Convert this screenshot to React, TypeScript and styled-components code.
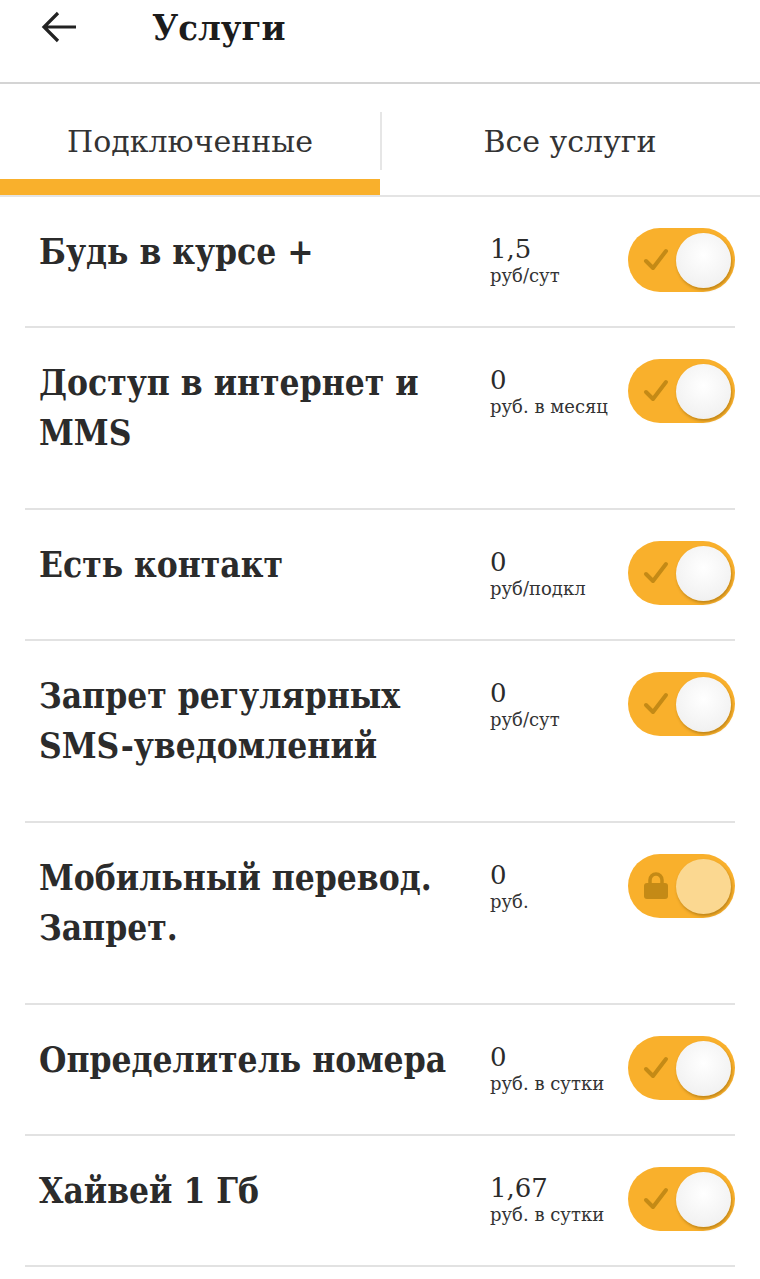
import React from "react";
import styled, { createGlobalStyle } from "styled-components";

const GlobalStyle = createGlobalStyle`
  body {
    margin: 0;
    background: #fff;
    font-family: "DejaVu Serif Condensed", "DejaVu Serif", serif;
    color: #2b2b2b;
  }
`;

const ORANGE = "#f9b02c";

const Header = styled.header`
  display: flex;
  align-items: center;
  box-sizing: border-box;
  height: 84px;
  padding: 0 0 28px 40px;
  border-bottom: 2px solid #d4d4d4;
`;

const Back = styled.span`
  display: flex;
  width: 40px;
  height: 40px;
  color: #222;
`;

const Title = styled.h1`
  margin: 0 0 0 72px;
  font-size: 36px;
  font-weight: 700;
  color: #1c1c1c;
`;

const Tabs = styled.nav`
  display: grid;
  grid-template-columns: 380px 1fr;
  border-bottom: 2px solid #e4e4e4;
`;

const Tab = styled.div<{ active?: boolean; divided?: boolean }>`
  position: relative;
  height: 111px;
  box-sizing: border-box;
  padding-top: 38px;
  text-align: center;
  font-family: "DejaVu Serif", serif;
  font-size: 30px;
  line-height: 40px;
  color: #333;
  ${({ active }) =>
    active &&
    `
    &::after {
      content: "";
      position: absolute;
      left: 0;
      right: 0;
      bottom: 0;
      height: 16px;
      background: ${ORANGE};
    }
  `}
  ${({ divided }) =>
    divided &&
    `
    &::before {
      content: "";
      position: absolute;
      left: 0;
      top: 28px;
      height: 58px;
      width: 2px;
      background: #e6e6e6;
    }
  `}
`;

const List = styled.ul`
  list-style: none;
  margin: 0 25px;
  padding: 0;
`;

const Row = styled.li<{ tall?: boolean }>`
  display: grid;
  grid-template-columns: 1fr 138px 107px;
  align-items: start;
  padding: 30px 0 0 14px;
  min-height: ${({ tall }) => (tall ? "182px" : "131px")};
  box-sizing: border-box;
  border-bottom: 2px solid #e2e2e2;
`;

const Name = styled.div`
  padding-right: 14px;
  font-size: 35px;
  font-weight: 700;
  line-height: 50px;
  color: #2b2b2b;
`;

const Price = styled.div`
  display: flex;
  flex-direction: column;
  padding-top: 6px;
  font-family: "DejaVu Serif", serif;
`;

const Amount = styled.span`
  font-size: 26px;
  line-height: 33px;
  color: #2b2b2b;
`;

const Unit = styled.span`
  font-size: 18px;
  line-height: 20px;
  color: #333;
  white-space: nowrap;
`;

const Track = styled.div`
  width: 107px;
  height: 64px;
  margin-top: 1px;
  border-radius: 32px;
  background: ${ORANGE};
  display: flex;
  align-items: center;
  justify-content: space-between;
  padding: 0 4px 0 14px;
  box-sizing: border-box;
`;

const Knob = styled.span<{ locked?: boolean }>`
  width: 55px;
  height: 55px;
  border-radius: 50%;
  background: ${({ locked }) =>
    locked
      ? "#fbd891"
      : "radial-gradient(circle at 50% 40%, #ffffff 0%, #f2f2f2 70%, #e6e6e6 100%)"};
  box-shadow: 1px 2px 3px rgba(120, 80, 0, 0.45);
`;

const Check = () => (
  <svg width="28" height="28" viewBox="0 0 28 28">
    <path
      d="M4 15 L11 22 L24 5"
      fill="none"
      stroke="#c48a16"
      strokeWidth="4"
      strokeLinecap="round"
      strokeLinejoin="round"
    />
  </svg>
);

const Lock = () => (
  <svg width="28" height="30" viewBox="0 0 28 30">
    <path d="M8 13 V9 a6 6 0 0 1 12 0 V13" fill="none" stroke="#c48a16" strokeWidth="3.5" />
    <rect x="2" y="12" width="24" height="16" rx="3" fill="#c48a16" />
  </svg>
);

const Toggle = ({ locked }: { locked?: boolean }) => (
  <Track>
    {locked ? <Lock /> : <Check />}
    <Knob locked={locked} />
  </Track>
);

const services = [
  { name: ["Будь в курсе +"], amount: "1,5", unit: "руб/сут" },
  { name: ["Доступ в интернет и", "MMS"], amount: "0", unit: "руб. в месяц" },
  { name: ["Есть контакт"], amount: "0", unit: "руб/подкл" },
  { name: ["Запрет регулярных", "SMS-уведомлений"], amount: "0", unit: "руб/сут" },
  { name: ["Мобильный перевод.", "Запрет."], amount: "0", unit: "руб.", locked: true },
  { name: ["Определитель номера"], amount: "0", unit: "руб. в сутки" },
  { name: ["Хайвей 1 Гб"], amount: "1,67", unit: "руб. в сутки" },
];

export default function App() {
  return (
    <>
      <GlobalStyle />
      <Header>
        <Back>
          <svg width="40" height="40" viewBox="0 0 40 40">
            <path d="M36 20 H5 M18 6 L4 20 L18 34" fill="none" stroke="#222" strokeWidth="3.2" />
          </svg>
        </Back>
        <Title>Услуги</Title>
      </Header>
      <Tabs>
        <Tab active>Подключенные</Tab>
        <Tab divided>Все услуги</Tab>
      </Tabs>
      <List>
        {services.map((s) => (
          <Row key={s.name.join(" ")} tall={s.name.length > 1}>
            <Name>
              {s.name.map((line, i) => (
                <React.Fragment key={line}>
                  {i > 0 && <br />}
                  {line}
                </React.Fragment>
              ))}
            </Name>
            <Price>
              <Amount>{s.amount}</Amount>
              <Unit>{s.unit}</Unit>
            </Price>
            <Toggle locked={s.locked} />
          </Row>
        ))}
      </List>
    </>
  );
}
